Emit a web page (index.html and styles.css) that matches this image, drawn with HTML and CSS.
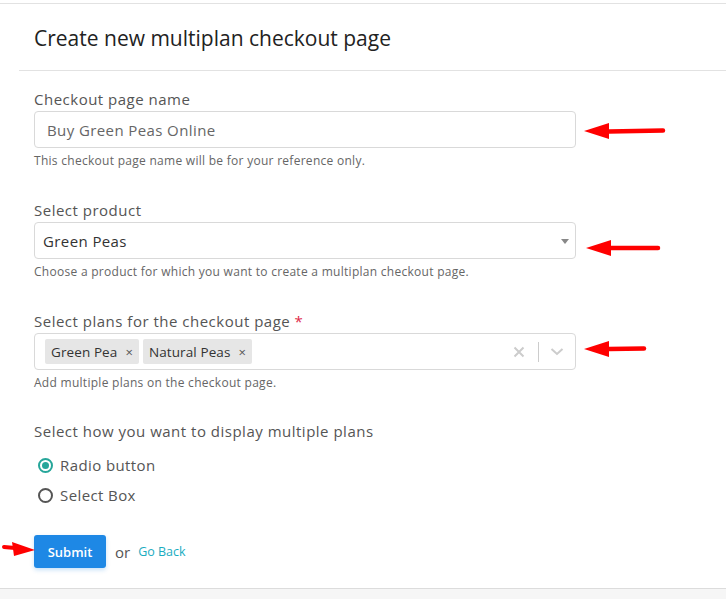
FILE: index.html
```html
<!DOCTYPE html>
<html>
<head>
<meta charset="utf-8">
<link rel="stylesheet" href="styles.css">
</head>
<body>
<div class="page">
  <div class="card">
    <div class="card-header">
      <h1 class="title">Create new multiplan checkout page</h1>
    </div>
    <form class="card-body">
      <div class="group">
        <label class="label">Checkout page name</label>
        <div class="field"><span class="field-text muted">Buy Green Peas Online</span></div>
        <p class="help">This checkout page name will be for your reference only.</p>
      </div>
      <div class="group">
        <label class="label">Select product</label>
        <div class="field select">
          <span class="field-text dark">Green Peas</span>
          <span class="caret"></span>
        </div>
        <p class="help">Choose a product for which you want to create a multiplan checkout page.</p>
      </div>
      <div class="group">
        <label class="label">Select plans for the checkout page <span class="req">*</span></label>
        <div class="field multi">
          <div class="tags">
            <span class="tag">Green Pea <span class="tag-x">×</span></span>
            <span class="tag">Natural Peas <span class="tag-x">×</span></span>
          </div>
          <div class="indicators">
            <svg class="clear-icon" width="12" height="12" viewBox="0 0 12 12"><path d="M1.5 1.5L10.5 10.5M10.5 1.5L1.5 10.5" stroke="#cccccc" stroke-width="2"/></svg>
            <span class="sep"></span>
            <svg class="chev-icon" width="14" height="9" viewBox="0 0 14 9"><path d="M1.5 2L7 7L12.5 2" stroke="#cccccc" stroke-width="2" fill="none"/></svg>
          </div>
        </div>
        <p class="help">Add multiple plans on the checkout page.</p>
      </div>
      <div class="display-group">
        <label class="label">Select how you want to display multiple plans</label>
        <div class="radios">
          <div class="radio-row"><span class="radio on"></span><span class="radio-label">Radio button</span></div>
          <div class="radio-row"><span class="radio"></span><span class="radio-label">Select Box</span></div>
        </div>
      </div>
      <div class="actions">
        <button type="button" class="btn">Submit</button>
        <span class="or">or</span>
        <a class="back">Go Back</a>
      </div>
    </form>
  </div>

  <svg class="arrow a1" width="84" height="20" viewBox="0 0 84 20"><path d="M26 10.5L80 9.5" stroke="#ff0000" stroke-width="4.5" stroke-linecap="round"/><path d="M1 10L26 2L26 18Z" fill="#ff0000"/></svg>
  <svg class="arrow a2" width="78" height="20" viewBox="0 0 78 20"><path d="M26 10L73 10" stroke="#ff0000" stroke-width="4.5" stroke-linecap="round"/><path d="M1 10L26 2L26 18Z" fill="#ff0000"/></svg>
  <svg class="arrow a3" width="66" height="20" viewBox="0 0 66 20"><path d="M26 10L61 9.5" stroke="#ff0000" stroke-width="4.5" stroke-linecap="round"/><path d="M1 10L26 2L26 18Z" fill="#ff0000"/></svg>
  <svg class="arrow a4" width="36" height="20" viewBox="0 0 36 20"><path d="M3 8L14 9" stroke="#ff0000" stroke-width="4" stroke-linecap="round"/><path d="M34 11L11 3L13 17Z" fill="#ff0000"/></svg>
</div>
</body>
</html>
```

FILE: styles.css
```css
* { box-sizing: border-box; }
html, body { margin: 0; padding: 0; }
body {
  background: #f6f6f6;
  font-family: "Open Sans", "Liberation Sans", sans-serif;
  color: #555;
}
.page {
  position: relative;
  width: 726px;
  min-height: 599px;
  padding-top: 3px;
  background: linear-gradient(#ffffff 0 3px, transparent 3px);
}
.card {
  background: #fff;
  border-top: 1px solid #e2e2e2;
  border-bottom: 1px solid #dcdcdc;
}
.card-header {
  height: 67px;
  margin-left: 19px;
  padding-left: 15px;
  border-bottom: 1px solid #e2e2e2;
  display: flex;
  align-items: center;
}
.title {
  margin: 0;
  font-size: 21px;
  font-weight: 400;
  color: #222;
  padding-top: 2px;
}
.card-body {
  padding: 18px 150px 20px 34px;
  margin: 0;
}
.group { margin-bottom: 31px; }
.label {
  display: block;
  font-size: 15px;
  line-height: 20px;
  color: #555;
  letter-spacing: 0.5px;
  margin-bottom: 2px;
}
.req { color: #e0294a; }
.field {
  height: 37px;
  border: 1px solid #d9d9d9;
  border-radius: 4px;
  display: flex;
  align-items: center;
  padding-left: 12px;
  position: relative;
}
.field-text { font-size: 15px; letter-spacing: 0.4px; }
.muted { color: #666; }
.dark { color: #333; }
.select { padding-left: 8px; }
.caret {
  position: absolute;
  right: 6px;
  top: 16px;
  width: 0; height: 0;
  border-left: 4px solid transparent;
  border-right: 4px solid transparent;
  border-top: 5px solid #888;
}
.multi {
  padding-left: 10px;
  justify-content: space-between;
}
.tags { display: flex; gap: 4px; }
.tag {
  background: #e6e6e6;
  border-radius: 2px;
  height: 25px;
  display: inline-flex;
  align-items: center;
  padding: 0 6px 0 6px;
  font-size: 13.5px;
  letter-spacing: 0.1px;
  color: #333;
}
.tag-x {
  margin-left: 8px;
  font-size: 13px;
  color: #555;
}
.indicators {
  display: flex;
  align-items: center;
  height: 100%;
}
.clear-icon { margin-right: 13px; }
.sep {
  width: 1px;
  height: 20px;
  background: #ccc;
}
.chev-icon { margin: 0 11px 0 11px; }
.help {
  margin: 5px 0 0;
  font-size: 12px;
  line-height: 16px;
  color: #666;
  letter-spacing: 0.28px;
}
.display-group { margin-top: -1px; }
.radios { margin-top: 9px; }
.radio-row {
  height: 30px;
  display: flex;
  align-items: center;
}
.radio {
  width: 15px;
  height: 15px;
  border-radius: 50%;
  border: 2px solid #555;
  margin-left: 4px;
  margin-right: 7px;
  position: relative;
}
.radio.on { border-color: #26a69a; }
.radio.on::after {
  content: "";
  position: absolute;
  left: 2px; top: 2px;
  width: 7px; height: 7px;
  border-radius: 50%;
  background: #26a69a;
}
.radio-label { font-size: 15px; color: #555; letter-spacing: 0.4px; }
.actions {
  margin-top: 25px;
  display: flex;
  align-items: center;
}
.btn {
  height: 33px;
  width: 72px;
  border: none;
  border-radius: 3px;
  background: #1e88e5;
  color: #fff;
  font-family: inherit;
  font-size: 13px;
  font-weight: 600;
  box-shadow: 0 2px 4px rgba(30, 136, 229, 0.25);
}
.or { margin-left: 9px; font-size: 15px; color: #555; }
.back { margin-left: 8px; font-size: 12.5px; color: #1aacbf; }
.arrow { position: absolute; }
.a1 { left: 583px; top: 121px; }
.a2 { left: 585px; top: 238px; }
.a3 { left: 583px; top: 339px; }
.a4 { left: 1px; top: 539px; }
```
